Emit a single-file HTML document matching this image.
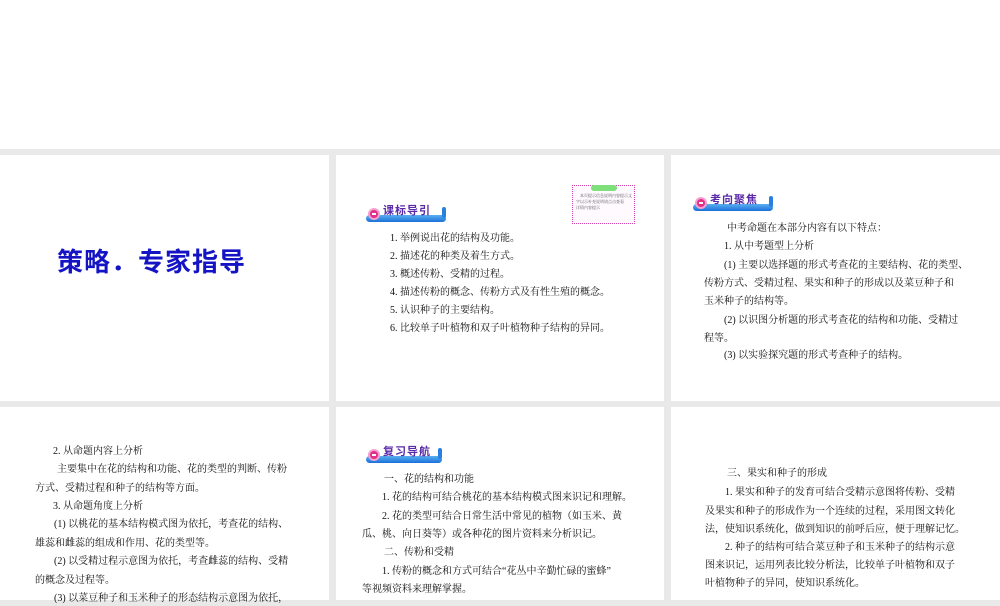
<!DOCTYPE html>
<html><head><meta charset="utf-8"><style>
*{margin:0;padding:0;box-sizing:border-box}
body{width:1000px;height:600px;background:#e9e9e9;position:relative;overflow:hidden;font-family:"Liberation Serif","Noto Serif CJK SC","Noto Sans CJK SC",serif;color:#111}
.s{position:absolute;background:#fff}
.l{position:absolute;font-size:10px;line-height:14px;white-space:nowrap}
.hd{position:absolute;height:18px}
.hd .bar{position:absolute;left:0;right:0;bottom:0;height:7px;border-radius:4px;background:linear-gradient(#5ab0f0,#1a70d8)}
.hd .bar:after{content:"";position:absolute;right:0;top:-8px;width:4px;height:11px;background:#2a80e0;border-radius:2px}
.hd .c{position:absolute;left:2px;top:4px;width:12px;height:12px;border-radius:50%;background:#e0308a;border:2px solid #f6a0d0;z-index:2}
.hd .c:after{content:"";position:absolute;left:2px;top:3px;width:4px;height:2px;background:#fff}
.hd .t{position:absolute;left:17px;top:0;font-size:11px;font-weight:bold;color:#5a2aa8;font-family:"Noto Sans CJK SC",sans-serif;letter-spacing:1px;line-height:13px}
</style></head><body>
<div class="s" style="left:0;top:0;width:1000px;height:149px"></div>
<div class="s" style="left:0;top:155px;width:329px;height:246px"></div>
<div class="s" style="left:336px;top:155px;width:328px;height:246px"></div>
<div class="s" style="left:671px;top:155px;width:329px;height:246px"></div>
<div class="s" style="left:0;top:407px;width:329px;height:193px"></div>
<div class="s" style="left:336px;top:407px;width:328px;height:193px"></div>
<div class="s" style="left:671px;top:407px;width:329px;height:193px"></div>

<div style="position:absolute;left:57px;top:246px;font-size:26px;line-height:32px;font-weight:bold;color:#1414c4;font-family:'Liberation Sans','Noto Sans CJK SC',sans-serif;white-space:nowrap;letter-spacing:1px">策略．专家指导</div>

<div class="hd" style="left:366px;top:204px;width:80px"><div class="bar"></div><div class="c"></div><div class="t">课标导引</div></div>
<div style="position:absolute;left:572px;top:185px;width:63px;height:39px;border:1px dotted #d040b0;background:#fffaff">
<div style="position:absolute;left:18px;top:-1px;width:26px;height:6px;background:#7de07a;border-radius:3px"></div>
<div style="position:absolute;left:3px;top:7px;width:56px;font-size:4px;line-height:6px;color:#555">　本页提示信息说明内容提示文字以示补充说明请点击查看<br>详情内容提示</div></div>
<div class="l" style="left:390px;top:232px">1. 举例说出花的结构及功能。</div>
<div class="l" style="left:390px;top:250px">2. 描述花的种类及着生方式。</div>
<div class="l" style="left:390px;top:268px">3. 概述传粉、受精的过程。</div>
<div class="l" style="left:390px;top:286px">4. 描述传粉的概念、传粉方式及有性生殖的概念。</div>
<div class="l" style="left:390px;top:304px">5. 认识种子的主要结构。</div>
<div class="l" style="left:390px;top:322px">6. 比较单子叶植物和双子叶植物种子结构的异同。</div>

<div class="hd" style="left:693px;top:193px;width:80px"><div class="bar"></div><div class="c"></div><div class="t">考向聚焦</div></div>
<div class="l" style="left:727px;top:222px">中考命题在本部分内容有以下特点：</div>
<div class="l" style="left:724px;top:240px">1. 从中考题型上分析</div>
<div class="l" style="left:724px;top:259px">(1) 主要以选择题的形式考查花的主要结构、花的类型、</div>
<div class="l" style="left:704px;top:277px">传粉方式、受精过程、果实和种子的形成以及菜豆种子和</div>
<div class="l" style="left:704px;top:295px">玉米种子的结构等。</div>
<div class="l" style="left:724px;top:314px">(2) 以识图分析题的形式考查花的结构和功能、受精过</div>
<div class="l" style="left:704px;top:332px">程等。</div>
<div class="l" style="left:724px;top:349px">(3) 以实验探究题的形式考查种子的结构。</div>

<div class="l" style="left:53px;top:445px">2. 从命题内容上分析</div>
<div class="l" style="left:57px;top:463px">主要集中在花的结构和功能、花的类型的判断、传粉</div>
<div class="l" style="left:35px;top:482px">方式、受精过程和种子的结构等方面。</div>
<div class="l" style="left:53px;top:500px">3. 从命题角度上分析</div>
<div class="l" style="left:54px;top:518px">(1) 以桃花的基本结构模式图为依托，考查花的结构、</div>
<div class="l" style="left:35px;top:537px">雄蕊和雌蕊的组成和作用、花的类型等。</div>
<div class="l" style="left:54px;top:555px">(2) 以受精过程示意图为依托，考查雌蕊的结构、受精</div>
<div class="l" style="left:35px;top:574px">的概念及过程等。</div>
<div class="l" style="left:54px;top:592px">(3) 以菜豆种子和玉米种子的形态结构示意图为依托，</div>

<div class="hd" style="left:366px;top:445px;width:76px"><div class="bar"></div><div class="c"></div><div class="t">复习导航</div></div>
<div class="l" style="left:384px;top:473px">一、花的结构和功能</div>
<div class="l" style="left:382px;top:491px">1. 花的结构可结合桃花的基本结构模式图来识记和理解。</div>
<div class="l" style="left:382px;top:510px">2. 花的类型可结合日常生活中常见的植物（如玉米、黄</div>
<div class="l" style="left:362px;top:528px">瓜、桃、向日葵等）或各种花的图片资料来分析识记。</div>
<div class="l" style="left:384px;top:546px">二、传粉和受精</div>
<div class="l" style="left:382px;top:565px">1. 传粉的概念和方式可结合“花丛中辛勤忙碌的蜜蜂”</div>
<div class="l" style="left:362px;top:583px">等视频资料来理解掌握。</div>

<div class="l" style="left:727px;top:467px">三、果实和种子的形成</div>
<div class="l" style="left:725px;top:486px">1. 果实和种子的发育可结合受精示意图将传粉、受精</div>
<div class="l" style="left:705px;top:505px">及果实和种子的形成作为一个连续的过程，采用图文转化</div>
<div class="l" style="left:705px;top:523px">法，使知识系统化，做到知识的前呼后应，便于理解记忆。</div>
<div class="l" style="left:725px;top:541px">2. 种子的结构可结合菜豆种子和玉米种子的结构示意</div>
<div class="l" style="left:705px;top:559px">图来识记，运用列表比较分析法，比较单子叶植物和双子</div>
<div class="l" style="left:705px;top:577px">叶植物种子的异同，使知识系统化。</div>
</body></html>
